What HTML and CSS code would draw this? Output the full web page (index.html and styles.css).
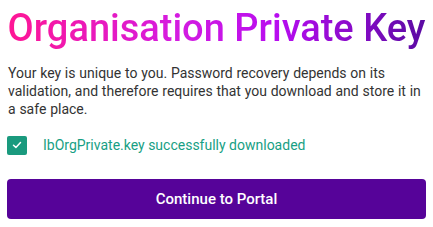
FILE: index.html
```html
<!DOCTYPE html>
<html lang="en">

<head>
    <meta charset="UTF-8">
    <meta name="viewport" content="width=device-width, initial-scale=1.0">
    <title>Organisation Private Key</title>
    <link rel="stylesheet" href="styles.css">
</head>

<body>
    <section class="key_panel">
        <h1 class="title">Organisation Private Key</h1>
        <p class="info">
            Your key is unique to you. Password recovery depends on its validation, and therefore requires that you download and store it in a safe place.
        </p>
        <div class="download_row">
            <span class="check">
                <svg width="10" height="8" viewBox="0 0 10 8">
                    <path d="M1.5 4.2 L3.9 6.4 L8.5 1.6" fill="none" stroke="#fff" stroke-width="1.5" stroke-linecap="round" stroke-linejoin="round" />
                </svg>
            </span>
            <span class="file_name">IbOrgPrivate.key successfully downloaded</span>
        </div>
        <button class="continue_btn">Continue to Portal</button>
    </section>
</body>

</html>
```

FILE: styles.css
```css
body {
    margin: 0;
    font-family: Roboto, "Liberation Sans", sans-serif;
    background: #fff;
}

.key_panel {
    padding: 0 7px;
    display: flex;
    flex-direction: column;
}

.title {
    margin: 7px 0 0;
    font-size: 38px;
    font-weight: 500;
    line-height: 42px;
    text-align: center;
    background-image: linear-gradient(90deg, #ff1694, #d51ce0 40%, #b70cf0 65%, #5a0aa2);
    -webkit-background-clip: text;
    background-clip: text;
    color: transparent;
}

.info {
    margin: 15px 0 0 1px;
    font-size: 14px;
    word-spacing: 0.3px;
    line-height: 18px;
    color: #333;
}

.download_row {
    display: flex;
    align-items: center;
    margin-top: 17px;
    height: 20px;
}

.check {
    width: 20px;
    height: 19px;
    border-radius: 2px;
    background: #1a9a7e;
    display: flex;
    align-items: center;
    justify-content: center;
}

.file_name {
    margin-left: 16px;
    font-size: 14px;
    color: #17a084;
}

.continue_btn {
    margin-top: 24px;
    height: 40px;
    border: none;
    border-radius: 4px;
    background: #560399;
    color: #fff;
    font-family: Roboto, "Liberation Sans", sans-serif;
    font-size: 15px;
    font-weight: 500;
}
```
